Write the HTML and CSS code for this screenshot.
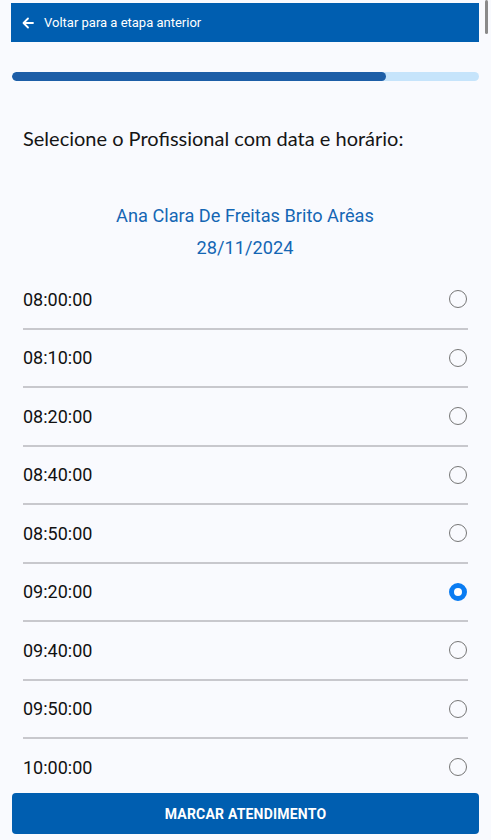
FILE: index.html
```html
<!DOCTYPE html>
<html>
<head>
    <meta charset="utf-8">
    <title>Agendamento</title>
    <link rel="stylesheet" href="styles.css">
</head>
<body>
    <div class="scroll-thumb"></div>

    <div class="back-bar">
        <svg class="back-icon" width="12" height="12" viewBox="0 0 12 12">
            <path d="M11 6H2M6 1.5L1.5 6L6 10.5" fill="none" stroke="#fff" stroke-width="1.8" stroke-linecap="round" stroke-linejoin="round"/>
        </svg>
        <span>Voltar para a etapa anterior</span>
    </div>

    <div class="progress">
        <div class="progress-fill"></div>
    </div>

    <h1 class="title">Selecione o Profissional com data e horário:</h1>

    <div class="professional">
        <div class="professional-name">Ana Clara De Freitas Brito Arêas</div>
        <div class="professional-date">28/11/2024</div>
    </div>

    <ul class="slots">
        <li class="slot"><span>08:00:00</span><span class="radio"></span></li>
        <li class="slot"><span>08:10:00</span><span class="radio"></span></li>
        <li class="slot"><span>08:20:00</span><span class="radio"></span></li>
        <li class="slot"><span>08:40:00</span><span class="radio"></span></li>
        <li class="slot"><span>08:50:00</span><span class="radio"></span></li>
        <li class="slot"><span>09:20:00</span><span class="radio checked"></span></li>
        <li class="slot"><span>09:40:00</span><span class="radio"></span></li>
        <li class="slot"><span>09:50:00</span><span class="radio"></span></li>
        <li class="slot"><span>10:00:00</span><span class="radio"></span></li>
    </ul>

    <button class="btn-submit">MARCAR ATENDIMENTO</button>
</body>
</html>
```

FILE: styles.css
```css
* {
    box-sizing: border-box;
}

body {
    margin: 0;
    padding: 3px 12px 0 11px;
    height: 840px;
    overflow: hidden;
    font-family: Roboto, 'Noto Sans', sans-serif;
    background: #f9fafe;
    color: #1a1a1a;
}

.scroll-thumb {
    position: fixed;
    top: 0;
    right: 3px;
    width: 3px;
    height: 34px;
    border-radius: 2px;
    background: #8a8a8a;
}

.back-bar {
    display: flex;
    align-items: center;
    gap: 10px;
    height: 39px;
    padding-left: 11px;
    background: #005eb0;
    color: #fff;
    font-size: 13px;
}

.progress {
    height: 9px;
    margin-top: 30px;
    margin-left: 1px;
    border-radius: 5px;
    background: #c6e4fb;
    overflow: hidden;
}

.progress-fill {
    width: 80%;
    height: 100%;
    border-radius: 5px;
    background: #1d5ea7;
}

.title {
    margin: 45px 0 0 12px;
    font-family: Lato, 'Open Sans', sans-serif;
    font-size: 20px;
    font-weight: 400;
    color: #151515;
}

.professional {
    margin-top: 55px;
    text-align: center;
    color: #1466b4;
    font-size: 18.2px;
}

.professional-date {
    margin-top: 11px;
}

.slots {
    list-style: none;
    margin: 13px 11px 0 12px;
    padding: 0;
}

.slot {
    display: flex;
    align-items: center;
    justify-content: space-between;
    height: 58.5px;
    border-bottom: 2px solid #c8c8cd;
    font-size: 18px;
    color: #111;
}

.radio {
    width: 18px;
    height: 18px;
    margin-right: 1px;
    border: 1.6px solid #767676;
    border-radius: 50%;
}

.radio.checked {
    border: 5px solid #0a7cf2;
    background: #fff;
}

.btn-submit {
    position: fixed;
    left: 12px;
    right: 12px;
    bottom: 6px;
    height: 41px;
    border: none;
    border-radius: 4px;
    background: #005eb0;
    color: #fff;
    font-family: Roboto, sans-serif;
    font-size: 14px;
    font-weight: 700;
    letter-spacing: 0.2px;
}
```
